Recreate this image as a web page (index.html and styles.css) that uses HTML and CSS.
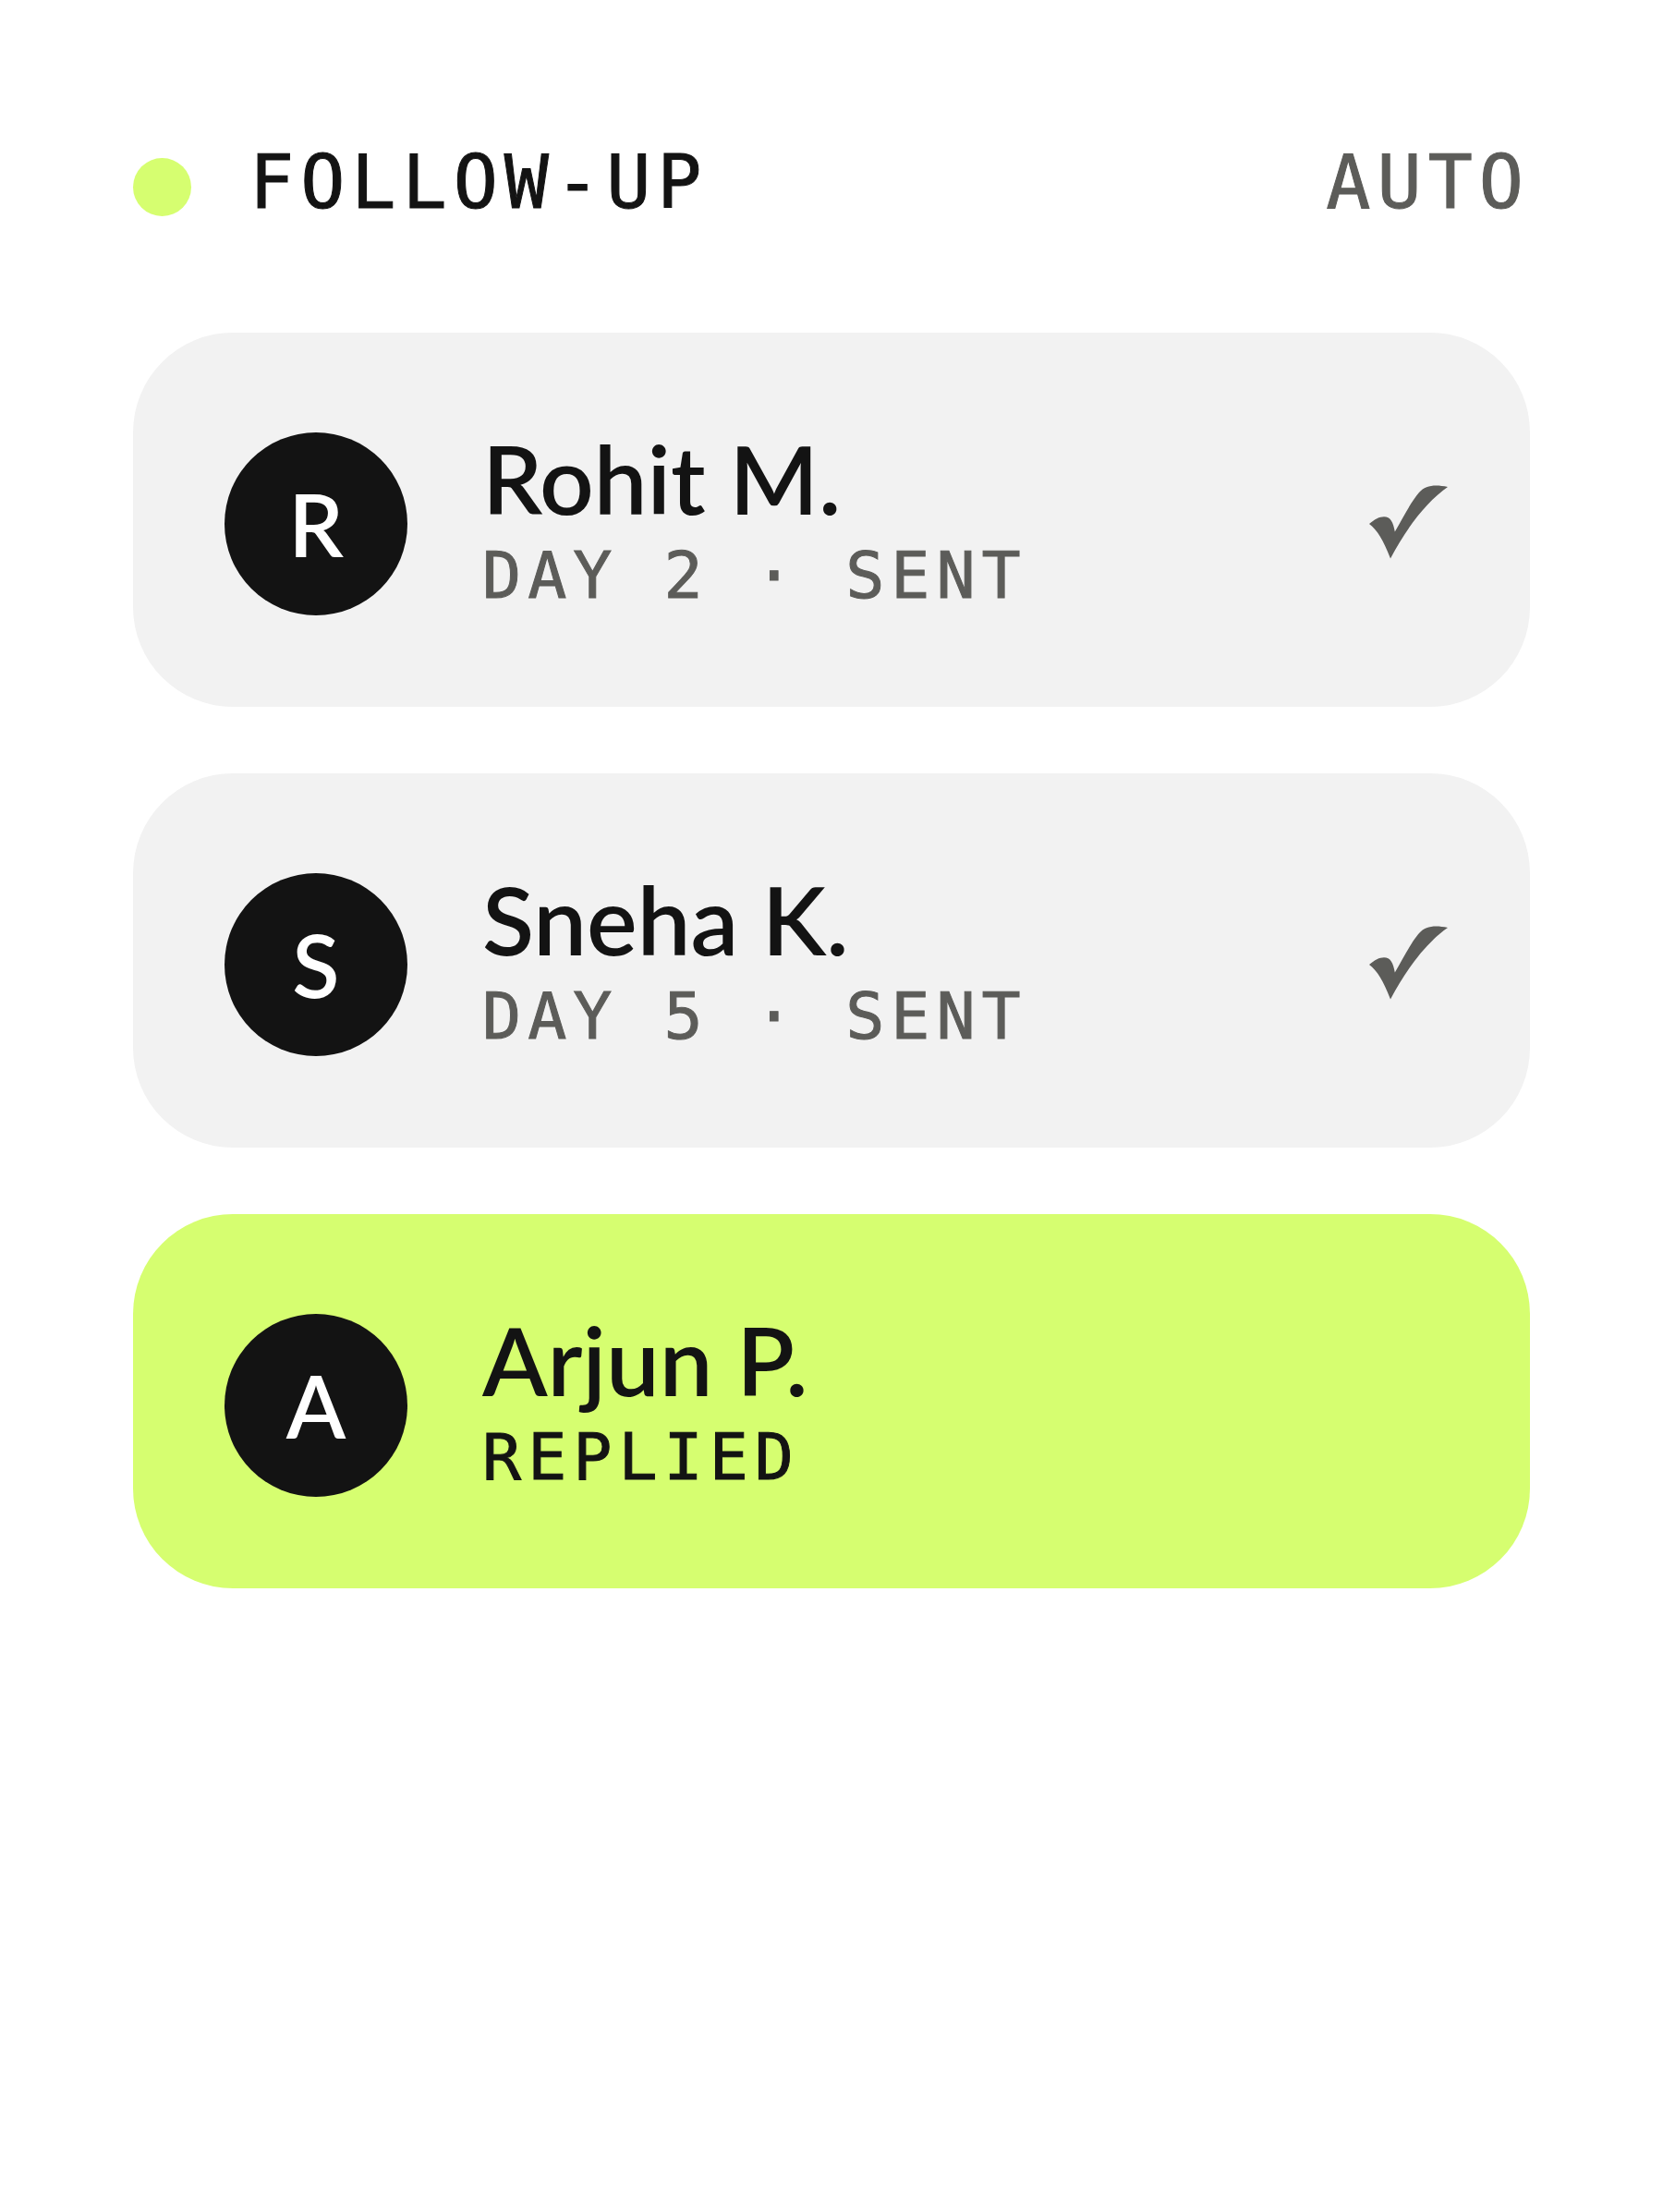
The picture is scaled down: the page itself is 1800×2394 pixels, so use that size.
FILE: index.html
```html
<!DOCTYPE html>
<html lang="en">
<head>
<meta charset="utf-8">
<meta name="viewport" content="width=device-width, initial-scale=1">
<title>Follow-up</title>
<link rel="stylesheet" href="styles.css">
</head>
<body>
<main class="panel">
  <header class="panel-header">
    <span class="dot"></span>
    <h1 class="title">FOLLOW-UP</h1>
    <span class="mode">AUTO</span>
  </header>
  <ul class="contacts">
    <li class="contact">
      <span class="avatar">R</span>
      <div class="details">
        <p class="name">Rohit M.</p>
        <p class="status">DAY 2 · SENT</p>
      </div>
      <svg class="check" viewBox="0 0 85 84" role="img" aria-label="Sent"><path d="M0 42C6 37 11 34.3 16 34.3C23 34.3 26 40 27.8 50.5C36 36 46 17 54 8C61 .2 71-1 85 2C62 18 40 47 23 79.5C15 59 9 49 0 42Z"/></svg>
    </li>
    <li class="contact">
      <span class="avatar">S</span>
      <div class="details">
        <p class="name">Sneha K.</p>
        <p class="status">DAY 5 · SENT</p>
      </div>
      <svg class="check" viewBox="0 0 85 84" role="img" aria-label="Sent"><path d="M0 42C6 37 11 34.3 16 34.3C23 34.3 26 40 27.8 50.5C36 36 46 17 54 8C61 .2 71-1 85 2C62 18 40 47 23 79.5C15 59 9 49 0 42Z"/></svg>
    </li>
    <li class="contact contact-replied">
      <span class="avatar">A</span>
      <div class="details">
        <p class="name">Arjun P.</p>
        <p class="status">REPLIED</p>
      </div>
    </li>
  </ul>
</main>
</body>
</html>
```
FILE: styles.css
```css
* {
  box-sizing: border-box;
  margin: 0;
  padding: 0;
}

body {
  background: #fff;
  color: #131313;
  font-family: Lato, "Liberation Sans", sans-serif;
}

.panel {
  padding: 144px;
}

.panel-header {
  display: flex;
  align-items: center;
  margin-bottom: 108px;
  font-family: "DejaVu Sans Mono", monospace;
  font-size: 80px;
  line-height: 108px;
  letter-spacing: 7px;
  -webkit-text-stroke: 1px currentColor;
}

.dot {
  width: 63px;
  height: 63px;
  margin: 9px 63px 0 0;
  border-radius: 50%;
  background: #d6fe70;
}

.title {
  font-size: inherit;
  font-weight: 400;
}

.mode {
  margin-left: auto;
  color: #5c5c59;
}

.contacts {
  display: grid;
  gap: 72px;
  list-style: none;
}

.contact {
  display: flex;
  align-items: center;
  gap: 81px;
  padding: 101px 89px 92px 99px;
  border-radius: 108px;
  background: #f2f2f2;
}

.contact-replied {
  background: #d6fe70;
}

.avatar {
  flex: none;
  width: 198px;
  border-radius: 50%;
  background: #131313;
  color: #fff;
  font-size: 94px;
  font-weight: 600;
  line-height: 198px;
  text-align: center;
}

.details {
  flex: 1;
}

.name {
  font-size: 103px;
  font-weight: 600;
  line-height: 112px;
}

.status {
  color: #5c5c59;
  font-family: "DejaVu Sans Mono", monospace;
  font-size: 70px;
  line-height: 100px;
  letter-spacing: 7px;
  -webkit-text-stroke: 1px currentColor;
}

.contact-replied .status {
  color: inherit;
}

.check {
  width: 85px;
  height: 84px;
  fill: #5c5c59;
}
```
